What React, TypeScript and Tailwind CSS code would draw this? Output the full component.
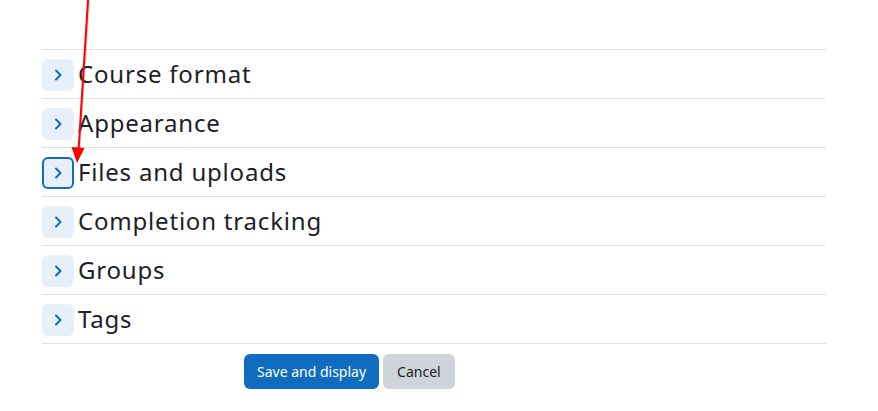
import React from "react";

const items = ["Course format", "Appearance", "Files and uploads", "Completion tracking", "Groups", "Tags"];

function Chevron() {
  return (
    <svg width="10" height="12" viewBox="0 0 10 12" fill="none">
      <path d="M3 1.5 L7.5 6 L3 10.5" stroke="#0f6cbf" strokeWidth="2" strokeLinecap="round" strokeLinejoin="round" />
    </svg>
  );
}

export default function App() {
  return (
    <div className="relative w-[878px] h-[411px] bg-white overflow-hidden" style={{ fontFamily: '"Noto Sans", "Open Sans", sans-serif' }}>
      <div className="pl-[42px] pr-[52px] pt-[49px]">
        {items.map((t, i) => (
          <div key={t} className="flex items-center gap-1 border-t border-[#dee2e6] h-[49px] pt-px">
            <div
              className={
                "flex items-center justify-center w-[32px] h-[32px] rounded-[6px] bg-[#e7eff9] " +
                (i === 2 ? "ring-2 ring-[#0f6cbf] ring-inset" : "")
              }
            >
              <Chevron />
            </div>
            <span className="text-[24px] leading-none tracking-[0.8px] text-[#1d2125] -mt-[2px]">{t}</span>
          </div>
        ))}
        <div className="border-t border-[#dee2e6] pt-[10px] pl-[202px] flex gap-1">
          <button className="bg-[#0f6cbf] text-white text-[14px] leading-[23px] px-[13px] py-[6px] rounded-[6px]">Save and display</button>
          <button className="bg-[#ced4da] text-[#1d2125] text-[14px] leading-[23px] px-[14px] py-[6px] rounded-[6px]">Cancel</button>
        </div>
      </div>
      <svg className="absolute left-0 top-0 pointer-events-none" width="878" height="411">
        <line x1="89" y1="1" x2="79.5" y2="150" stroke="rgba(0,0,0,0.18)" strokeWidth="2" />
        <line x1="88" y1="0" x2="78.6" y2="149" stroke="#ff0000" strokeWidth="2" />
        <polygon points="71.5,147 84.5,148 77,163" fill="#ff0000" />
      </svg>
    </div>
  );
}
